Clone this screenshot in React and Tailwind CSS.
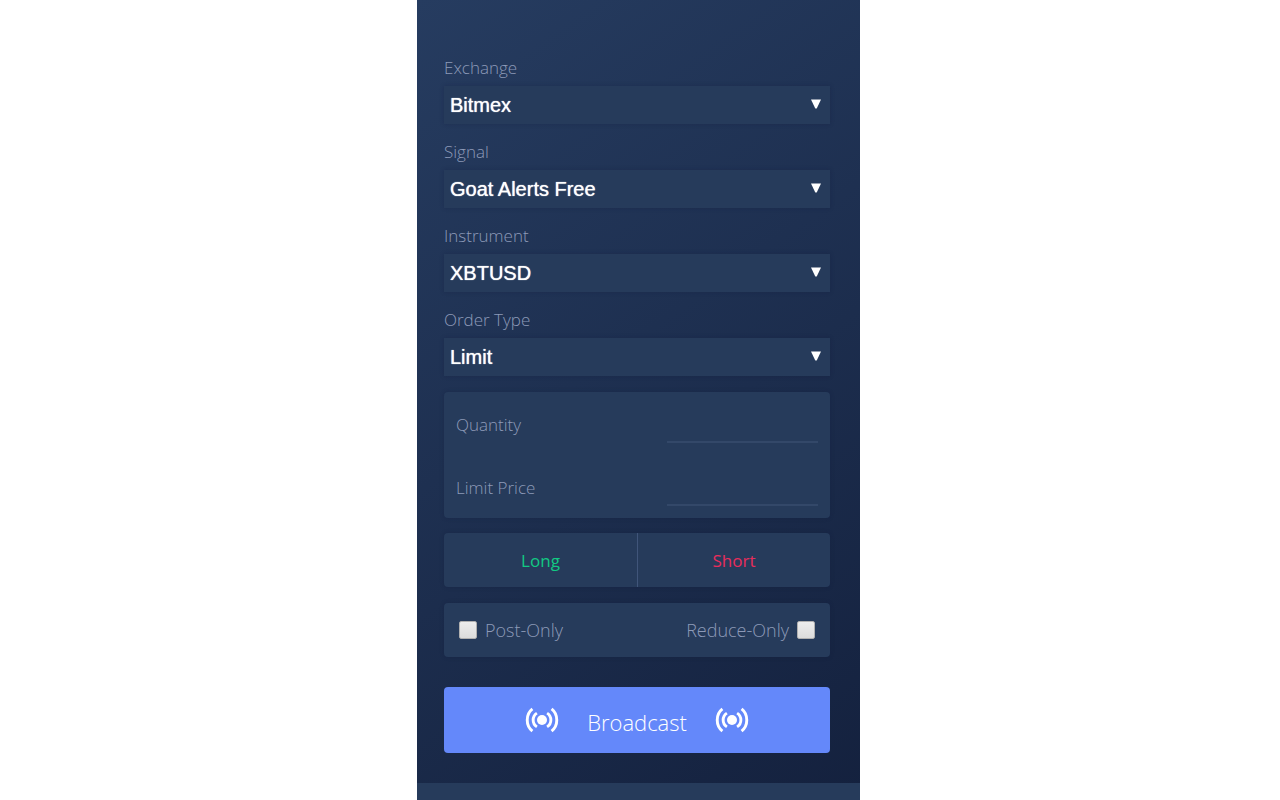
import { useState } from 'react';

const fields = [
  { id: 'exchange', label: 'Exchange', options: ['Bitmex'] },
  { id: 'signal', label: 'Signal', options: ['Goat Alerts Free'] },
  { id: 'instrument', label: 'Instrument', options: ['XBTUSD'] },
  { id: 'orderType', label: 'Order Type', options: ['Limit'] },
];

const inputs = [
  { id: 'quantity', label: 'Quantity' },
  { id: 'limitPrice', label: 'Limit Price' },
];

function SelectField({ id, label, options }) {
  return (
    <div className="flex flex-col gap-1.5">
      <label htmlFor={id} className="self-start text-[17px] leading-6">
        {label}
      </label>
      <div className="relative">
        <select
          id={id}
          className="block h-[38px] w-full appearance-none bg-[#263b5b] pl-1.5 pr-8 font-['Liberation_Sans',Arial,sans-serif] text-xl font-normal text-white shadow-[0_0_4px_rgba(16,28,58,0.3)] outline-none text-shadow-[0_0_1px_#ffffff]"
        >
          {options.map((option) => (
            <option key={option}>{option}</option>
          ))}
        </select>
        <svg viewBox="0 0 10 10" className="pointer-events-none absolute right-2 top-[13px] h-2.5 w-3" aria-hidden="true">
          <path d="M0 0.5h10L5.7 9.6H4.3z" fill="#fff" />
        </svg>
      </div>
    </div>
  );
}

function BroadcastIcon() {
  return (
    <svg viewBox="0 0 34 26" className="h-[26px] w-[34px]" fill="none" stroke="currentColor" strokeWidth="2.9" aria-hidden="true">
      <circle cx="17" cy="13" r="5" fill="currentColor" stroke="none" />
      <path d="M11.9 6.1C6.9 9.3 6.9 16.7 11.9 19.9M22.1 6.1c5 3.2 5 10.6 0 13.8" />
      <path d="M7.4 1.9C0.5 7.4 0.5 18.6 7.4 24.1M26.6 1.9c6.9 5.5 6.9 16.7 0 22.2" />
    </svg>
  );
}

function Checkbox({ id, checked, onChange }) {
  return (
    <input
      id={id}
      type="checkbox"
      checked={checked}
      onChange={(e) => onChange(e.target.checked)}
      className="h-[18px] w-[18px] appearance-none rounded-xs border border-[#b0b0b0] bg-linear-to-b from-[#ededed] to-[#dcdcdc] checked:bg-[#6488fa] checked:bg-none"
    />
  );
}

export default function App() {
  const [postOnly, setPostOnly] = useState(false);
  const [reduceOnly, setReduceOnly] = useState(false);

  return (
    <div className="min-h-screen bg-white pr-[3px] font-['Open_Sans','Noto_Sans',sans-serif] font-light">
      <main className="mx-auto flex min-h-screen max-w-[443px] flex-col bg-linear-[145deg] from-[#263c60] to-[#14213e] text-[#8d9ab8]">
        <form className="flex flex-col gap-4 pb-[30px] pl-[27px] pr-[30px] pt-14" onSubmit={(e) => e.preventDefault()}>
          {fields.map((field) => (
            <SelectField key={field.id} {...field} />
          ))}

          {/* Order size and price */}
          <div className="flex flex-col gap-3 rounded bg-[#263b5b] p-3 shadow-[0_0_4px_rgba(16,28,58,0.3)]">
            {inputs.map(({ id, label }) => (
              <div key={id} className="flex h-[51px] items-end justify-between gap-4 first:h-[39px]">
                <label htmlFor={id} className="pb-1.5 text-[17px] leading-6">
                  {label}
                </label>
                <input
                  id={id}
                  type="text"
                  inputMode="decimal"
                  className="h-7 w-[151px] border-b-2 border-[#334869] bg-transparent text-right text-[17px] text-white outline-none"
                />
              </div>
            ))}
          </div>

          {/* Side */}
          <div className="-mt-px grid h-[54px] grid-cols-2 rounded bg-[#263b5b] text-[17px] font-normal shadow-[0_0_4px_rgba(16,28,58,0.3)]">
            <button type="button" className="pt-0.5 text-[#12c983]">Long</button>
            <button type="button" className="border-l border-[#40557a] pt-0.5 text-[#e82d5c]">Short</button>
          </div>

          {/* Execution flags */}
          <div className="flex h-[54px] items-center justify-between rounded bg-[#263b5b] px-[15px] text-lg shadow-[0_0_4px_rgba(16,28,58,0.3)]">
            <div className="flex items-center gap-2">
              <Checkbox id="postOnly" checked={postOnly} onChange={setPostOnly} />
              <label htmlFor="postOnly">Post-Only</label>
            </div>
            <div className="flex items-center gap-2">
              <label htmlFor="reduceOnly">Reduce-Only</label>
              <Checkbox id="reduceOnly" checked={reduceOnly} onChange={setReduceOnly} />
            </div>
          </div>

          <button type="submit" className="mt-3.5 flex h-[66px] items-center justify-center gap-7 rounded bg-[#6488fa] text-[22px] text-white">
            <BroadcastIcon />
            <span className="pt-1">Broadcast</span>
            <BroadcastIcon />
          </button>
        </form>
        <footer className="min-h-4 grow bg-[#263b5b]" />
      </main>
    </div>
  );
}
